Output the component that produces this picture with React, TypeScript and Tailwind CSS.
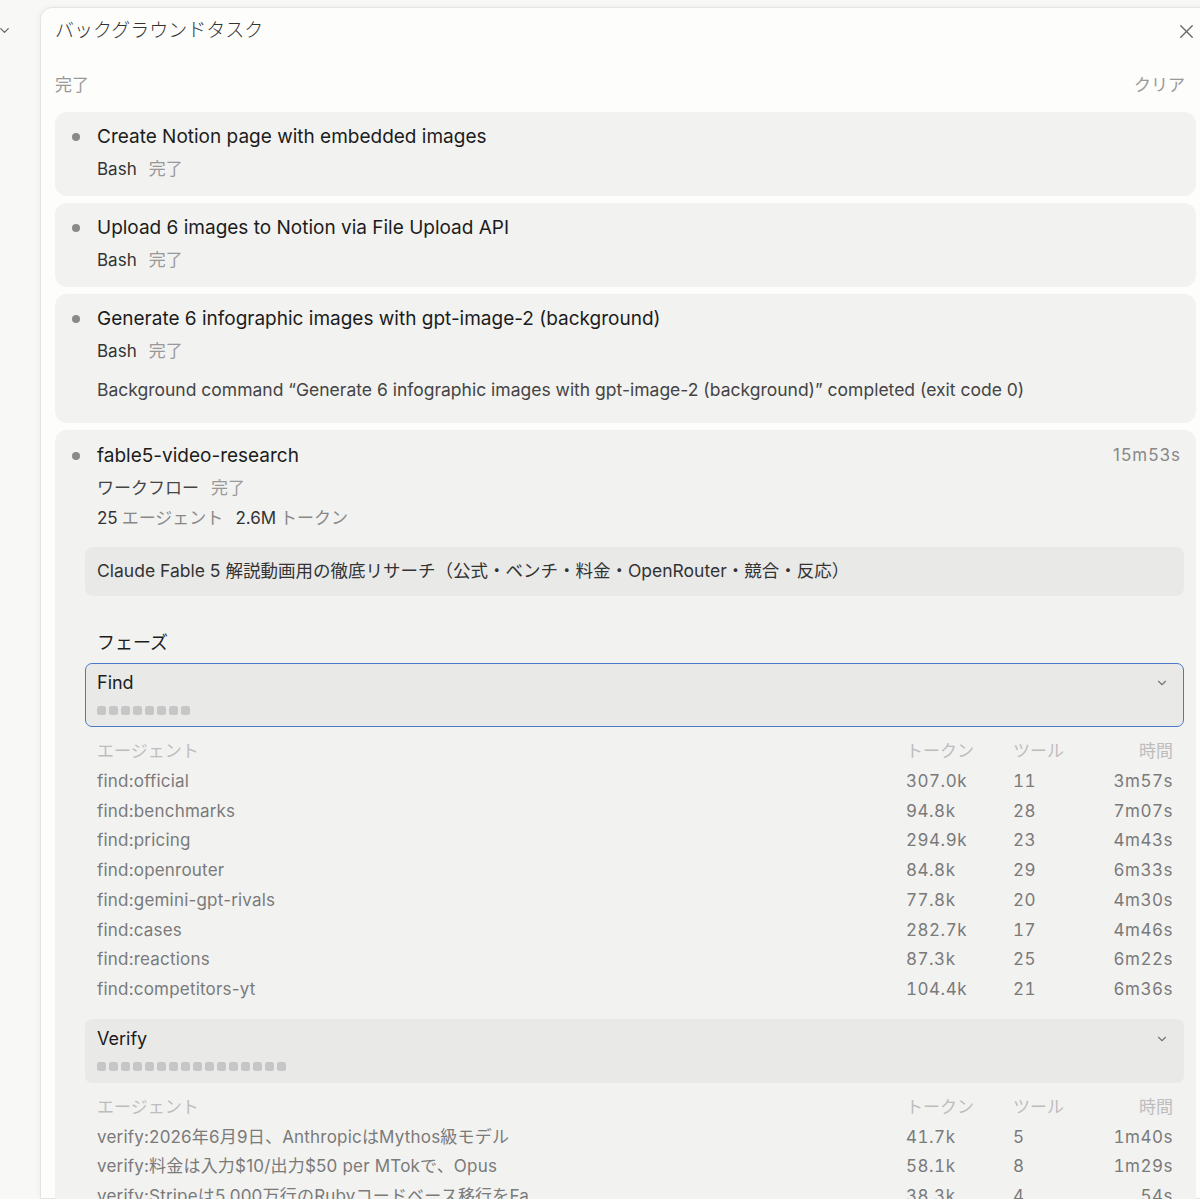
import { ChevronDown, X } from "lucide-react";

type Agent = { name: string; tokens: string; tools: string; time: string };

const findAgents: Agent[] = [
  { name: "find:official", tokens: "307.0k", tools: "11", time: "3m57s" },
  { name: "find:benchmarks", tokens: "94.8k", tools: "28", time: "7m07s" },
  { name: "find:pricing", tokens: "294.9k", tools: "23", time: "4m43s" },
  { name: "find:openrouter", tokens: "84.8k", tools: "29", time: "6m33s" },
  { name: "find:gemini-gpt-rivals", tokens: "77.8k", tools: "20", time: "4m30s" },
  { name: "find:cases", tokens: "282.7k", tools: "17", time: "4m46s" },
  { name: "find:reactions", tokens: "87.3k", tools: "25", time: "6m22s" },
  { name: "find:competitors-yt", tokens: "104.4k", tools: "21", time: "6m36s" },
];

const verifyAgents: Agent[] = [
  { name: "verify:2026年6月9日、AnthropicはMythos級モデル", tokens: "41.7k", tools: "5", time: "1m40s" },
  { name: "verify:料金は入力$10/出力$50 per MTokで、Opus", tokens: "58.1k", tools: "8", time: "1m29s" },
  { name: "verify:Stripeは5,000万行のRubyコードベース移行をFa", tokens: "38.3k", tools: "4", time: "54s" },
];

const font = "font-['Inter','Noto_Sans_CJK_JP',sans-serif]";

function Dot() {
  return <span className="block h-[8px] w-[8px] rounded-full bg-[#8a8a8a]" />;
}

function TaskCard({
  title,
  kind,
  detail,
}: {
  title: string;
  kind: string;
  detail?: string;
}) {
  return (
    <div className={`rounded-[12px] bg-[#f2f2f1] pt-[12px] ${detail ? "pb-[20px]" : "pb-[14px]"}`}>
      <div className="flex items-center">
        <div className="flex w-[42px] justify-center">
          <Dot />
        </div>
        <div className="text-[19px] leading-[26px] text-[#1c1c1c]">{title}</div>
      </div>
      <div className="mt-[6px] pl-[42px] text-[17px] leading-[26px]">
        <span className="text-[#333]">{kind}</span>
        <span className="ml-[12px] text-[#999]">完了</span>
      </div>
      {detail && (
        <div className="mt-[13px] pl-[42px] text-[17.5px] leading-[26px] text-[#444]">{detail}</div>
      )}
    </div>
  );
}

function AgentTable({ agents }: { agents: Agent[] }) {
  return (
    <div className="pl-[12px] pr-[11px] text-[17px]">
      <div className="grid h-[29.75px] grid-cols-[1fr_107px_90px_70px] items-center text-[#bdbdbd]">
        <span>エージェント</span>
        <span>トークン</span>
        <span>ツール</span>
        <span className="text-right">時間</span>
      </div>
      {agents.map((a) => (
        <div
          key={a.name}
          className="grid h-[29.75px] grid-cols-[1fr_107px_90px_70px] items-center whitespace-nowrap text-[#7a7a7a]"
        >
          <span className="overflow-hidden tracking-[0.2px]">{a.name}</span>
          <span className="tabular-nums tracking-[0.5px]">{a.tokens}</span>
          <span className="tabular-nums tracking-[0.5px]">{a.tools}</span>
          <span className="text-right tabular-nums tracking-[0.5px]">{a.time}</span>
        </div>
      ))}
    </div>
  );
}

function Phase({ name, count, active }: { name: string; count: number; active?: boolean }) {
  return (
    <div
      className={`rounded-[7px] border-[1.5px] bg-[#e9e9e8] pl-[11px] pr-[14px] pt-[7px] pb-[11px] ${
        active ? "border-[#4a79c9]" : "border-transparent"
      }`}
    >
      <div className="flex items-center justify-between">
        <span className="text-[18px] leading-[24px] text-[#1c1c1c]">{name}</span>
        <ChevronDown className="h-[14px] w-[14px] text-[#777]" strokeWidth={2} />
      </div>
      <div className="mt-[11px] flex gap-[3px]">
        {Array.from({ length: count }).map((_, i) => (
          <span key={i} className="block h-[9px] w-[9px] rounded-[2.5px] bg-[#c6c6c6]" />
        ))}
      </div>
    </div>
  );
}

export default function App() {
  return (
    <div className={`flex h-screen w-full overflow-hidden bg-[#f8f8f7] ${font}`}>
      {/* left rail */}
      <div className="w-[40px] shrink-0 pt-[23px]">
        <ChevronDown className="-ml-[3px] h-[15px] w-[15px] text-[#666]" strokeWidth={2} />
      </div>

      {/* panel */}
      <div className="mt-[7px] w-[1171px] shrink-0 rounded-tl-[12px] border border-[#e4e4e2] bg-[#fdfdfc] px-[14px] shadow-[0_0_6px_rgba(0,0,0,0.05)]">
        <div className="flex h-[46px] items-center justify-between">
          <h1 className="text-[19px] font-light text-[#333]">バックグラウンドタスク</h1>
          <X className="-mr-[2px] h-[23px] w-[23px] text-[#666]" strokeWidth={1.4} />
        </div>

        <div className="mt-[18px] flex items-center justify-between pr-[11px] text-[17px] leading-[26px] text-[#999]">
          <span>完了</span>
          <span>クリア</span>
        </div>

        <div className="mt-[14px] flex flex-col gap-[7px]">
          <TaskCard title="Create Notion page with embedded images" kind="Bash" />
          <TaskCard title="Upload 6 images to Notion via File Upload API" kind="Bash" />
          <TaskCard
            title="Generate 6 infographic images with gpt-image-2 (background)"
            kind="Bash"
            detail="Background command “Generate 6 infographic images with gpt-image-2 (background)” completed (exit code 0)"
          />

          {/* workflow card */}
          <div className="rounded-t-[12px] bg-[#f2f2f1] pt-[13px] pb-[40px]">
            <div className="flex items-center pr-[15px]">
              <div className="flex w-[42px] justify-center">
                <Dot />
              </div>
              <div className="flex-1 text-[19px] leading-[26px] text-[#1c1c1c]">fable5-video-research</div>
              <span className="text-[17px] tracking-[1px] text-[#888]">15m53s</span>
            </div>
            <div className="mt-[6px] pl-[42px] text-[17px] leading-[26px]">
              <span className="text-[#444]">ワークフロー</span>
              <span className="ml-[12px] text-[#999]">完了</span>
            </div>
            <div className="mt-[4px] pl-[42px] text-[17px] leading-[26px]">
              <span className="text-[#333]">25</span>
              <span className="ml-[4px] text-[#888]">エージェント</span>
              <span className="ml-[12px] text-[#333]">2.6M</span>
              <span className="ml-[4px] text-[#888]">トークン</span>
            </div>

            <div className="pl-[30px] pr-[12px]">
              <div className="mt-[16px] flex h-[49px] items-center rounded-[8px] bg-[#e9e9e8] px-[12px] text-[17.5px] text-[#333]">
                Claude Fable 5 解説動画用の徹底リサーチ（公式・ベンチ・料金・OpenRouter・競合・反応）
              </div>

              <div className="mt-[34px] pl-[12px] text-[18px] leading-[26px] text-[#1c1c1c]">フェーズ</div>

              <div className="mt-[7px]">
                <Phase name="Find" count={8} active />
              </div>
              <div className="mt-[10px]">
                <AgentTable agents={findAgents} />
              </div>

              <div className="mt-[14px]">
                <Phase name="Verify" count={16} />
              </div>
              <div className="mt-[10px]">
                <AgentTable agents={verifyAgents} />
              </div>
            </div>
          </div>
        </div>
      </div>
    </div>
  );
}
